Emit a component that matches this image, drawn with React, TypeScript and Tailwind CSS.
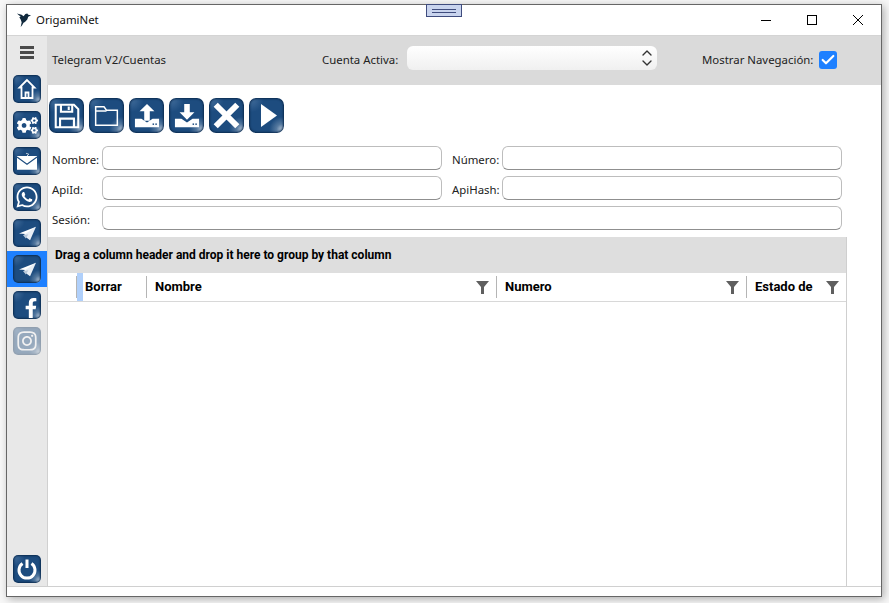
import type { ReactNode } from "react";
import { Check, ChevronDown, ChevronUp } from "lucide-react";
import { FaCogs, FaFacebookF, FaInstagram, FaWhatsapp } from "react-icons/fa";

const Tile = ({ size, children, faded }: { size: "sm" | "lg"; children: ReactNode; faded?: boolean }) => (
  <div
    className={`${size === "sm" ? "w-[28px] h-[28px] rounded-[5px]" : "w-[35px] h-[35px] rounded-[7px]"} ${faded ? "opacity-40" : ""} flex items-center justify-center overflow-hidden shrink-0 bg-[#1d4c7f] bg-[radial-gradient(circle_at_94%_90%,#b4c5d8_0%,#55799f_12%,transparent_28%),radial-gradient(circle_at_8%_6%,#3f6a99_0%,transparent_26%)] shadow-[inset_0_0_2px_1px_#0c2c50] text-white`}
  >
    {children}
  </div>
);

const Bird = () => (
  <svg width="16" height="16" viewBox="0 0 17 16" fill="#10293d">
    <path d="M1 1l5 1.5 2 1.5 2-2.5 2-.5 1 1.5 3 .5-3 1.5-1 3-2.5 2.5L8 11l-1.5 2.5L5 15.5l1-5-1-3L3.5 5 5 4.5z" />
  </svg>
);

const HomeGlyph = () => (
  <svg width="20" height="22" viewBox="0 0 20 22" fill="none" stroke="white" strokeWidth="1.8">
    <path d="M10 2L2.5 9.5H4.5V20H15.5V9.5H17.5Z" />
    <path d="M8.5 20V14.5H11.5V20" />
  </svg>
);

const Envelope = () => (
  <svg width="20" height="19" viewBox="0 0 22 20">
    <path d="M0 4h22v15H0z" fill="white" />
    <path d="M0 5l11 8 11-8" fill="none" stroke="#1d4c7f" strokeWidth="1.2" />
    <path d="M10 1l3 1-2 2 3 1" fill="none" stroke="white" strokeWidth="0.8" />
  </svg>
);

const Plane = () => (
  <svg width="19" height="17" viewBox="0 0 22 20">
    <path d="M1 10L21 2L12 11Z" fill="white" />
    <path d="M6 12L21 2L14 18Z" fill="#e8eef5" />
    <path d="M6 12L9 16L12 11Z" fill="#b9c9da" />
  </svg>
);

const Floppy = () => (
  <svg width="26" height="26" viewBox="0 0 30 30" fill="none" stroke="white" strokeWidth="2.4">
    <path d="M2 2H23L28 7V28H2Z" />
    <path d="M8 2V10H21V2" />
    <path d="M7 28V18H23V28" />
    <path d="M17 4V8" />
  </svg>
);

const FolderGlyph = () => (
  <svg width="25" height="20" viewBox="0 0 28 24" fill="none" stroke="white" strokeWidth="1.8">
    <path d="M1 1H11L14 5H27V23H1Z" />
    <path d="M1 6H14" />
  </svg>
);

const Tray = ({ up }: { up: boolean }) => (
  <svg width="26" height="26" viewBox="0 0 28 28" fill="white">
    {up ? <path d="M14 1L22 9H17V19H11V9H6Z" /> : <path d="M11 1H17V10H22L14 18L6 10H11Z" />}
    <path d="M1 17H8L14 21L20 17H27V26H1Z" />
    <rect x="20" y="22" width="1.6" height="1.6" fill="#1d4c7f" />
    <rect x="23" y="22" width="1.6" height="1.6" fill="#1d4c7f" />
  </svg>
);

const Cross = () => (
  <svg width="27" height="27" viewBox="0 0 30 30" stroke="white" strokeWidth="6.5">
    <path d="M3 3L27 27M27 3L3 27" />
  </svg>
);

const Play = () => (
  <svg width="16" height="23" viewBox="0 0 16 23" fill="white" className="translate-x-[2px]">
    <path d="M0 0L16 11.5L0 23Z" />
  </svg>
);

const Power = () => (
  <svg width="22" height="22" viewBox="0 0 22 22" fill="none" stroke="white" strokeWidth="3">
    <path d="M6.5 5.5a8 8 0 1 0 9 0" />
    <path d="M11 1.5V10" />
  </svg>
);

const Funnel = () => (
  <svg width="13" height="13" viewBox="0 0 13 13" fill="#5f5f5f">
    <path d="M0 0H13L8 6V13H5V6Z" />
  </svg>
);

const Field = ({ label, wide }: { label: string; wide?: boolean }) => (
  <div className={`flex ${wide ? "w-[790px]" : "w-[390px]"}`}>
    <span className="w-[50px] shrink-0 pt-[5px] text-[11.4px] text-[#222]">{label}</span>
    <div className="h-[24px] flex-1 rounded-[6px] border border-[#bdbdbd] border-b-[#8f8f8f] bg-white" />
  </div>
);

const HeadCell = ({ label, width, filter, tight }: { label: string; width: string; filter?: boolean; tight?: boolean }) => (
  <div className={`${width} ${tight ? "pl-[2px]" : "pl-[8px]"} flex h-full items-center justify-between pr-[7px] shrink-0`}>
    <span className="font-['Roboto',sans-serif] text-[13px] font-bold text-black">{label}</span>
    {filter && <Funnel />}
  </div>
);

const Separator = () => <div className="h-[22px] w-px shrink-0 bg-[#b5b5b5]" />;

export default function App() {
  return (
    <div className="h-[603px] w-[889px] overflow-hidden bg-[#f7f7f7] pl-[6px] pt-[4px] font-['Noto_Sans',sans-serif]">
      <div className="relative flex h-[593px] w-[876px] flex-col border border-[#666] bg-white shadow-[2px_2px_8px_rgba(0,0,0,0.3)]">
        <div className="absolute left-[419px] top-[-1px] flex h-[13px] w-[36px] flex-col items-center justify-center gap-[2px] border border-[#3f4c7e] bg-[#c9d4ee]">
          <div className="h-px w-[24px] bg-[#3f4c7e]" />
          <div className="h-px w-[24px] bg-[#3f4c7e]" />
        </div>

        <div className="flex h-[31px] shrink-0 items-center border-b border-[#d4d4d4] pl-[9px]">
          <Bird />
          <span className="ml-[4px] text-[11.4px] text-[#111]">OrigamiNet</span>
          <div className="ml-auto flex items-center gap-[36px] pr-[18px]">
            <div className="h-px w-[10px] bg-black" />
            <div className="h-[10px] w-[10px] border border-black" />
            <svg width="10" height="10" viewBox="0 0 10 10" stroke="black" strokeWidth="1">
              <path d="M0 0L10 10M10 0L0 10" />
            </svg>
          </div>
        </div>

        <div className="flex min-h-0 flex-1">
          <aside className="flex w-[40px] shrink-0 flex-col items-center bg-[#e8e8e8]">
            <div className="mb-[16px] mt-[10px] flex w-[14px] flex-col gap-[2px]">
              <div className="h-[3px] bg-[#4a4a4a]" />
              <div className="h-[3px] bg-[#4a4a4a]" />
              <div className="h-[3px] bg-[#4a4a4a]" />
            </div>
            <div className="flex w-full flex-col items-center gap-[8px]">
              <Tile size="sm"><HomeGlyph /></Tile>
              <Tile size="sm"><FaCogs size={21} /></Tile>
              <Tile size="sm"><Envelope /></Tile>
              <Tile size="sm"><FaWhatsapp size={24} /></Tile>
              <Tile size="sm"><Plane /></Tile>
            </div>
            <div className="mt-[4px] flex h-[36px] w-full items-center justify-center bg-[#1e80ff]">
              <Tile size="sm"><Plane /></Tile>
            </div>
            <div className="mt-[4px] flex w-full flex-col items-center gap-[8px]">
              <Tile size="sm"><FaFacebookF size={20} className="translate-x-[4px] translate-y-[3px]" /></Tile>
              <Tile size="sm" faded><FaInstagram size={22} /></Tile>
            </div>
            <div className="mb-[3px] mt-auto">
              <Tile size="sm"><Power /></Tile>
            </div>
          </aside>

          <main className="flex min-w-0 flex-1 flex-col">
            <div className="flex h-[49px] shrink-0 items-center bg-[#dadada] pb-[2px] pl-[5px] text-[11.4px] text-[#222]">
              <span className="w-[270px] whitespace-nowrap">Telegram V2/Cuentas</span>
              <span className="w-[85px] whitespace-nowrap">Cuenta Activa:</span>
              <div className="mt-[-3px] flex h-[24px] w-[250px] items-center justify-end rounded-[6px] bg-gradient-to-b from-white to-[#f0f0f0] pr-[2px] text-[#333]">
                <div className="flex flex-col">
                  <ChevronUp size={16} className="-mb-[3px]" strokeWidth={2} />
                  <ChevronDown size={16} className="-mt-[3px]" strokeWidth={2} />
                </div>
              </div>
              <span className="ml-[45px] w-[117px] whitespace-nowrap">Mostrar Navegación:</span>
              <div className="flex h-[18px] w-[18px] items-center justify-center rounded-[3px] bg-[#1e80ff]">
                <Check size={16} strokeWidth={3.2} className="text-white" />
              </div>
            </div>

            <div className="flex min-h-0 flex-1 flex-col border-l border-[#d0d0d0]">
              <div className="flex gap-[5px] pl-[1px] pt-[13px]">
                <Tile size="lg"><Floppy /></Tile>
                <Tile size="lg"><FolderGlyph /></Tile>
                <Tile size="lg"><Tray up /></Tile>
                <Tile size="lg"><Tray up={false} /></Tile>
                <Tile size="lg"><Cross /></Tile>
                <Tile size="lg"><Play /></Tile>
              </div>

              <div className="mt-[13px] flex flex-col gap-[6px] pl-[4px]">
                <div className="flex gap-[10px]">
                  <Field label="Nombre:" />
                  <Field label="Número:" />
                </div>
                <div className="flex gap-[10px]">
                  <Field label="ApiId:" />
                  <Field label="ApiHash:" />
                </div>
                <Field label="Sesión:" wide />
              </div>

              <div className="mt-[7px] flex min-h-0 w-[799px] flex-1 flex-col border-r border-[#cfcfcf]">
                <div className="flex h-[36px] shrink-0 items-center bg-[#dedede] pl-[7px] font-['Roboto',sans-serif] text-[12px] font-bold text-black">
                  Drag a column header and drop it here to group by that column
                </div>
                <div className="flex h-[29px] shrink-0 items-center border-b border-[#d8d8d8]">
                  <div className="w-[28px] shrink-0" />
                  <Separator />
                  <div className="h-full w-[6px] shrink-0 bg-[#b0d0fb]" />
                  <HeadCell label="Borrar" width="w-[63px]" tight />
                  <Separator />
                  <HeadCell label="Nombre" width="w-[349px]" filter />
                  <Separator />
                  <HeadCell label="Numero" width="w-[249px]" filter />
                  <Separator />
                  <HeadCell label="Estado de" width="w-[99px]" filter />
                </div>
              </div>
            </div>
          </main>
        </div>

        <div className="h-[10px] shrink-0 border-t border-[#d0d0d0] bg-white" />
      </div>
    </div>
  );
}
